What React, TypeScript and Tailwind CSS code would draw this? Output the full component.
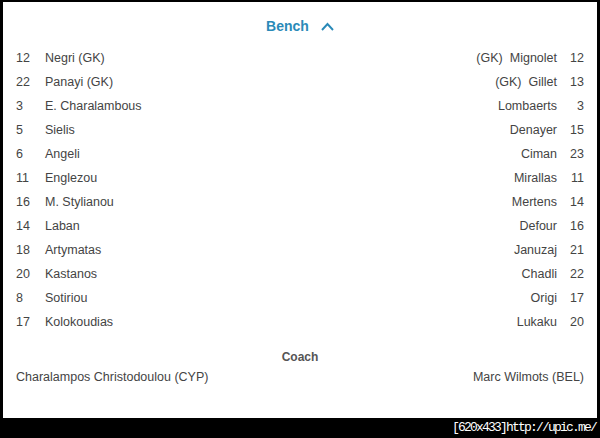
import React from 'react';

const home = [
  ['12', 'Negri', true],
  ['22', 'Panayi', true],
  ['3', 'E. Charalambous', false],
  ['5', 'Sielis', false],
  ['6', 'Angeli', false],
  ['11', 'Englezou', false],
  ['16', 'M. Stylianou', false],
  ['14', 'Laban', false],
  ['18', 'Artymatas', false],
  ['20', 'Kastanos', false],
  ['8', 'Sotiriou', false],
  ['17', 'Kolokoudias', false],
] as const;

const away = [
  ['12', 'Mignolet', true],
  ['13', 'Gillet', true],
  ['3', 'Lombaerts', false],
  ['15', 'Denayer', false],
  ['23', 'Ciman', false],
  ['11', 'Mirallas', false],
  ['14', 'Mertens', false],
  ['16', 'Defour', false],
  ['21', 'Januzaj', false],
  ['22', 'Chadli', false],
  ['17', 'Origi', false],
  ['20', 'Lukaku', false],
] as const;

export default function App() {
  return (
    <div
      className="w-[600px] h-[438px] bg-black flex flex-col text-[#444] text-[12.5px]"
      style={{ fontFamily: '"Liberation Sans", Arial, sans-serif' }}
    >
      <div className="mt-[2px] mx-[3px] h-[416px] bg-white flex flex-col px-[13px]">
        <div className="h-[44px] flex items-center justify-center gap-[12px] pt-[4px] text-[#2a8ab8] text-[14px] font-bold">
          <span>Bench</span>
          <svg width="13" height="9" viewBox="0 0 13 9" fill="none" stroke="#2a8ab8" strokeWidth="1.9">
            <path d="M1 8 L6.5 2 L12 8" />
          </svg>
        </div>

        <div className="flex justify-between">
          <div className="flex flex-col">
            {home.map(([n, name, gk]) => (
              <div key={n + name} className="h-[24px] flex items-center">
                <span className="w-[29px]">{n}</span>
                <span>{name}{gk ? ' (GK)' : ''}</span>
              </div>
            ))}
          </div>
          <div className="flex flex-col items-end">
            {away.map(([n, name, gk]) => (
              <div key={n + name} className="h-[24px] flex items-center justify-end">
                {gk && <span className="mr-[7px]">(GK)</span>}
                <span>{name}</span>
                <span className="w-[27px] text-right">{n}</span>
              </div>
            ))}
          </div>
        </div>

        <div className="mt-[13px] text-center font-bold text-[#555] text-[12px] leading-[20px]">Coach</div>
        <div className="flex justify-between leading-[20px]">
          <span>Charalampos Christodoulou (CYP)</span>
          <span>Marc Wilmots (BEL)</span>
        </div>
      </div>
      <div className="flex-1 flex items-center justify-end pr-[4px]">
        <span
          className="text-white text-[13px] tracking-[-1.8px]"
          style={{ fontFamily: '"Liberation Mono", monospace' }}
        >
          [620x433]http://upic.me/
        </span>
      </div>
    </div>
  );
}
